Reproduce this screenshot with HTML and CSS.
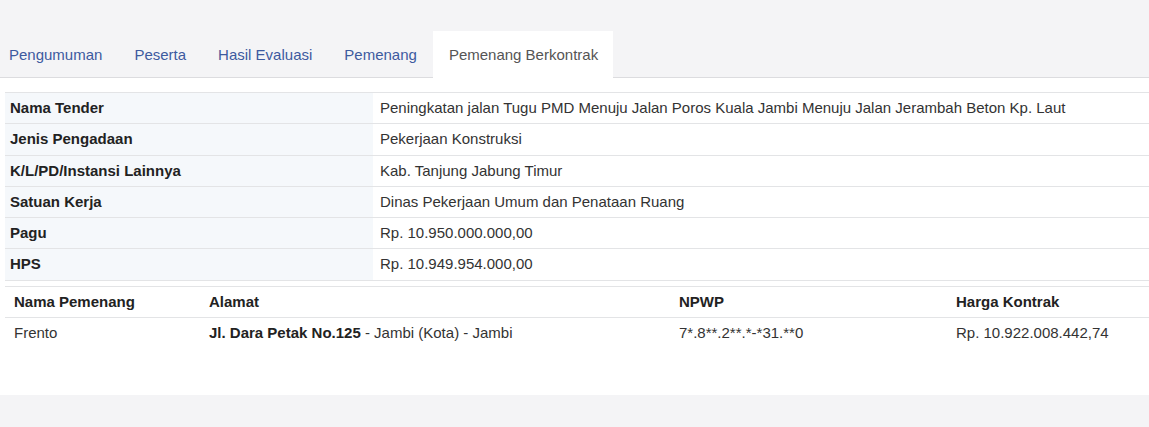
FILE: index.html
```html
<!DOCTYPE html>
<html lang="id">
<head>
<meta charset="utf-8">
<title>Pemenang Berkontrak</title>
<link rel="stylesheet" href="styles.css">
</head>
<body>
<nav class="tabs">
  <a class="tab tab-first" href="#">Pengumuman</a>
  <a class="tab" href="#">Peserta</a>
  <a class="tab" href="#">Hasil Evaluasi</a>
  <a class="tab" href="#">Pemenang</a>
  <a class="tab tab-active" href="#">Pemenang Berkontrak</a>
</nav>
<main class="content">
  <table class="info">
    <tr><th>Nama Tender</th><td>Peningkatan jalan Tugu PMD Menuju Jalan Poros Kuala Jambi Menuju Jalan Jerambah Beton Kp. Laut</td></tr>
    <tr><th>Jenis Pengadaan</th><td>Pekerjaan Konstruksi</td></tr>
    <tr><th>K/L/PD/Instansi Lainnya</th><td>Kab. Tanjung Jabung Timur</td></tr>
    <tr><th>Satuan Kerja</th><td>Dinas Pekerjaan Umum dan Penataan Ruang</td></tr>
    <tr><th>Pagu</th><td>Rp. 10.950.000.000,00</td></tr>
    <tr><th>HPS</th><td>Rp. 10.949.954.000,00</td></tr>
  </table>
  <table class="winners">
    <thead>
      <tr><th class="c1">Nama Pemenang</th><th class="c2">Alamat</th><th class="c3">NPWP</th><th>Harga Kontrak</th></tr>
    </thead>
    <tbody>
      <tr><td>Frento</td><td><b>Jl. Dara Petak No.125</b> - Jambi (Kota) - Jambi</td><td>7*.8**.2**.*-*31.**0</td><td>Rp. 10.922.008.442,74</td></tr>
    </tbody>
  </table>
</main>
<div class="footer-band"></div>
</body>
</html>
```
FILE: styles.css
```css
html, body {
  margin: 0;
  padding: 0;
}
body {
  background: #f4f4f6;
  font-family: "Liberation Sans", Arial, sans-serif;
  color: #333;
}
.tabs {
  display: flex;
  padding-top: 31px;
  border-bottom: 1px solid #dcdcdf;
  background: #f4f4f6;
}
.tab {
  display: block;
  padding: 0 16px;
  height: 47px;
  line-height: 47px;
  font-size: 15px;
  color: #3d5a9f;
  text-decoration: none;
  margin-bottom: -1px;
}
.tab-first {
  padding-left: 9px;
}
.tab-active {
  background: #fff;
  color: #555;
  padding-right: 15px;
}
.content {
  background: #fff;
  padding: 14px 0 47px 5px;
}
table {
  border-collapse: collapse;
  width: 100%;
  font-size: 15px;
}
.info th, .info td {
  border-top: 1px solid #e3e4e6;
  border-bottom: 1px solid #e3e4e6;
  padding: 5px 5px;
  line-height: 20.3px;
  text-align: left;
  vertical-align: middle;
}
.info th {
  width: 358px;
  background: #f5f8fb;
  font-weight: bold;
  color: #222;
}
.info td {
  padding-left: 7px;
}
.winners {
  margin-top: 5px;
}
.winners th, .winners td {
  padding: 5px 9px;
  line-height: 20px;
  text-align: left;
}
.winners th {
  border-top: 1px solid #e3e4e6;
  border-bottom: 1px solid #e3e4e6;
  font-weight: bold;
  color: #222;
}
.winners td b {
  color: #222;
}
.winners .c1 { width: 177px; }
.winners .c2 { width: 452px; }
.winners .c3 { width: 259px; }
.footer-band {
  height: 40px;
  background: #f4f4f6;
}
```
